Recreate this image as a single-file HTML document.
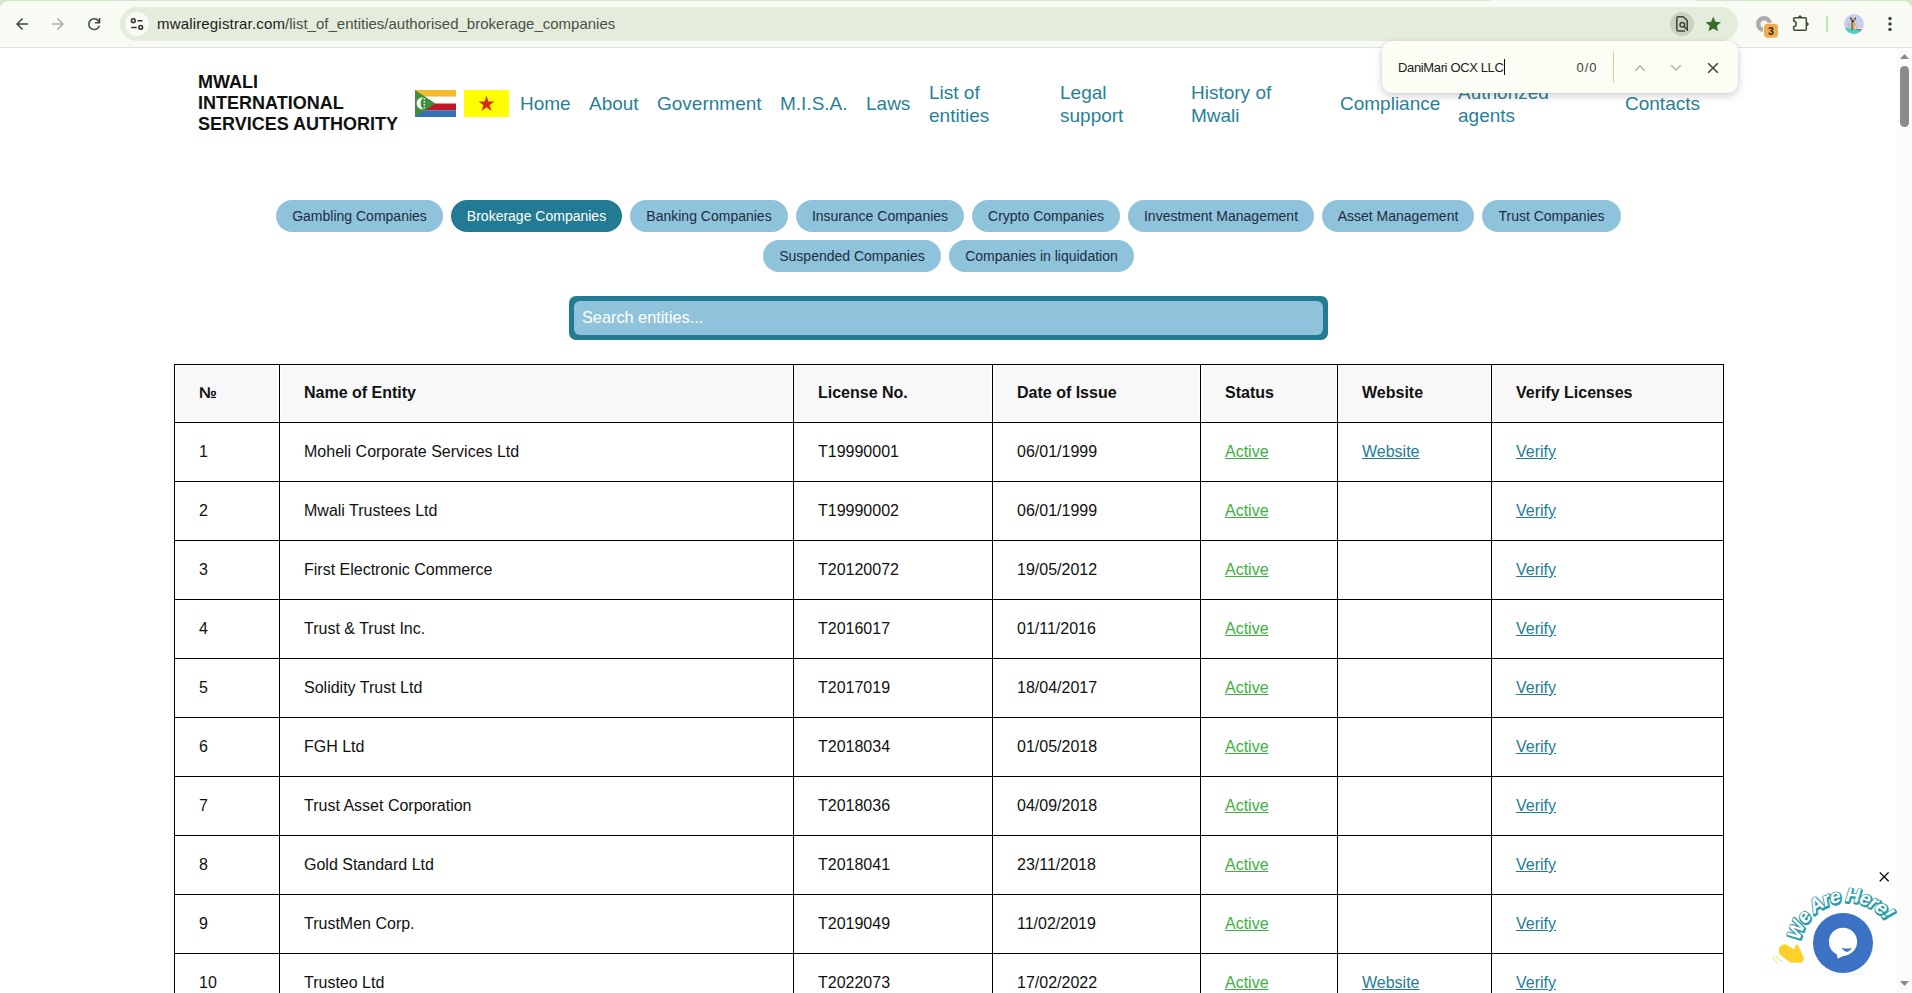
<!DOCTYPE html>
<html lang="en">
<head>
<meta charset="utf-8">
<title>Authorised Brokerage Companies</title>
<style>
*{box-sizing:border-box;margin:0;padding:0}
html,body{width:1912px;height:993px;overflow:hidden;background:#fff;font-family:"Liberation Sans",sans-serif;color:#111}
body{position:relative}
/* ---------- browser chrome ---------- */
#chrome{position:absolute;left:0;top:0;width:1912px;height:48px;background:#f8fbf3;border-bottom:1px solid #dfe3d8}
#chrome .topstrip{position:absolute;left:0;top:0;width:1912px;height:1px;background:#d3e5cb}
#omni{position:absolute;left:120px;top:7px;width:1618px;height:34px;border-radius:17px;background:#e4eddc}
#omni .tune{position:absolute;left:5px;top:5px;width:24px;height:24px;border-radius:12px;background:#f8fbf3}
#url{position:absolute;left:157px;top:15px;font-size:15px;line-height:18px;color:#4b5047;white-space:nowrap;letter-spacing:0}
#url b{font-weight:normal;color:#1d211b;letter-spacing:.17px}
.tb{position:absolute}
/* ---------- find bar ---------- */
#find{position:absolute;left:1382px;top:41px;width:356px;height:52px;border-radius:10px;background:#fcfdf5;box-shadow:0 3px 9px rgba(0,0,0,.18),0 0 2px rgba(0,0,0,.08);z-index:20}
#find .q{position:absolute;left:16px;top:18px;font-size:13px;line-height:18px;color:#1d211b;white-space:nowrap;letter-spacing:-.36px}
#find .cnt{position:absolute;left:194.500px;top:18px;font-size:13px;line-height:18px;color:#3c4238;letter-spacing:1px}
#find .sep{position:absolute;left:231px;top:10px;width:1px;height:32px;background:#b9dca0}
#find .caret{position:absolute;left:122px;top:18px;width:1px;height:16px;background:#111}
/* ---------- page ---------- */
#page{position:absolute;left:0;top:48px;width:1897px;height:945px;overflow:hidden;background:#fff}
#sb{position:absolute;left:1897px;top:48px;width:15px;height:945px;background:#fbfbfb}
#sb .thumb{position:absolute;left:3px;top:18px;width:9px;height:61px;border-radius:4.5px;background:#8b8b8b}
#logo{position:absolute;left:198px;top:24px;font-weight:bold;font-size:18px;line-height:21px;color:#111;white-space:nowrap}
.nav{position:absolute;font-size:19px;line-height:23px;color:#2a7f98;white-space:nowrap}
.pill{position:absolute;height:32px;border-radius:16px;background:#8fc3dc;color:#1d2c3f;font-size:14px;line-height:32px;text-align:center;white-space:nowrap}
.pill.on{background:#227b92;color:#fff}
#search{position:absolute;left:569px;top:248px;width:759px;height:44px;border-radius:7px;background:#227b92}
#search i{position:absolute;left:5px;top:5px;right:5px;bottom:5px;border-radius:6px;background:#8fc3dc}
#search span{position:absolute;left:13px;top:10px;font-size:16.3px;line-height:22px;color:#fff}
table{position:absolute;left:174px;top:316px;border-collapse:collapse;table-layout:fixed;width:1549px;font-size:16px;line-height:18px}
th,td{border:1px solid #000;padding:20px 24px;text-align:left;white-space:nowrap;height:59px;vertical-align:middle}
th{background:#f8f8f8;font-weight:bold;height:58px;padding:19px 24px 20px;box-shadow:inset 0 0 0 1px #fff}
a.g{color:#40b040;text-decoration:underline}
a.b{color:#237c95;text-decoration:underline}
</style>
</head>
<body>
<div id="chrome">
  <div class="topstrip"></div><div class="tb" style="left:1490px;top:0;width:205px;height:1px;background:#f3f8ec"></div>
  <div id="omni"><div class="tune"></div></div>

  <svg class="tb" style="left:0;top:0" width="14" height="14" viewBox="0 0 14 14"><path d="M0 0H14V1H9Q1 1 0 9Z" fill="#d3e5cb"/></svg>
  <svg class="tb" style="left:1898px;top:0" width="14" height="14" viewBox="0 0 14 14"><path d="M14 0H0V1H5Q13 1 14 9Z" fill="#d3e5cb"/></svg>
  <svg class="tb" style="left:13px;top:15px" width="18" height="18" viewBox="0 0 24 24"><path fill="#3f4a3a" d="M20 11H7.83l5.59-5.59L12 4l-8 8 8 8 1.41-1.41L7.83 13H20v-2z"/></svg>
  <svg class="tb" style="left:49px;top:15px" width="18" height="18" viewBox="0 0 24 24"><path fill="#a9aea5" d="M4 11h12.17l-5.59-5.59L12 4l8 8-8 8-1.41-1.41L16.170 13H4v-2z"/></svg>
  <svg class="tb" style="left:84.8px;top:14.8px" width="18.4" height="18.4" viewBox="0 0 24 24"><path fill="#3f4a3a" d="M12 20q-3.350 0-5.675-2.325T4 12q0-3.350 2.325-5.675T12 4q1.725 0 3.300.7125T18 6.750V4h2v7h-7V9h4.200q-.8-1.400-2.1875-2.200T12 6Q9.500 6 7.750 7.750T6 12q0 2.500 1.750 4.250T12 18q1.925 0 3.475-1.100T17.650 14h2.100q-.7 2.650-2.850 4.325T12 20Z"/></svg>
  <svg class="tb" style="left:125px;top:12px" width="24" height="24" viewBox="0 0 24 24" fill="none" stroke="#2e362b" stroke-width="1.5"><circle cx="8.300" cy="8.700" r="1.900"/><path d="M12.500 8.700H17.400M6.200 15.400H11.700"/><circle cx="15.700" cy="15.400" r="1.900"/></svg>
  <div class="tb" style="left:1670px;top:12px;width:24px;height:24px;border-radius:12px;background:#c9d2c1"></div>
  <svg class="tb" style="left:1674px;top:15px" width="16" height="18" viewBox="0 0 16 18" fill="none" stroke="#3b4437" stroke-width="1.500" stroke-linejoin="round"><path d="M13.200 15.200V5.500L9.200 1.700H4.200Q2.800 1.700 2.800 3.100V14.600Q2.800 16 4.200 16H11"/><circle cx="8.300" cy="9.800" r="2.300"/><path d="M10 11.500L13.600 15.300" stroke-linecap="round"/></svg>
  <svg class="tb" style="left:1704.300px;top:15.100px" width="18.600" height="18.600" viewBox="0 0 24 24"><path fill="#3b6b2b" d="M12 17.270L18.180 21l-1.640-7.030L22 9.240l-7.190-.610L12 2 9.190 8.630 2 9.240l5.460 4.730L5.820 21z"/></svg>
  <svg class="tb" style="left:1752px;top:12px" width="30" height="28" viewBox="0 0 30 28"><circle cx="12" cy="12" r="5.750" fill="none" stroke="#ababab" stroke-width="4.500"/><rect x="11" y="10.800" width="16" height="16" rx="4.500" fill="#f8fbf3"/><rect x="12" y="11.800" width="14" height="14" rx="3.500" fill="#f0ab4d"/><text x="18.800" y="22.900" font-family="Liberation Sans, sans-serif" font-weight="bold" font-size="10.500" text-anchor="middle" fill="#2a2118">3</text></svg>
  <svg class="tb" style="left:1790px;top:13px" width="22" height="22" viewBox="0 0 22 22"><path d="M4.700 4.750H15.300Q16.350 4.750 16.350 5.800V16.200Q16.350 17.250 15.300 17.250H4.700Q3.650 17.250 3.650 16.200V13.700C7 13.500 7 8.300 3.650 8.100V5.800Q3.650 4.750 4.700 4.750Z" fill="none" stroke="#3a4a35" stroke-width="1.500" stroke-linejoin="round"/><path d="M7.900 4.300Q10 .300 12.100 4.300ZM16.800 8.900Q20.800 11 16.800 13.100Z" fill="#3a4a35"/></svg>
  <div class="tb" style="left:1826px;top:16px;width:2px;height:16px;border-radius:1px;background:#b5e89d"></div>
  <svg class="tb" style="left:1844px;top:14px" width="20" height="20" viewBox="0 0 20 20"><defs><clipPath id="av"><circle cx="10" cy="10" r="9.900"/></clipPath></defs><g clip-path="url(#av)"><rect width="20" height="20" fill="#c8cee9"/><path d="M3.400 9.600Q4.700 8.300 6 9.600V13.600H3.400Z" fill="#b6bccf"/><path d="M13 13.800H18V15.200H13Z" fill="#e4e7f6"/><path d="M0 13.700L20 16.300V20H0Z" fill="#40d3c6"/><path d="M11.800 15L17.400 15.900" stroke="#5a2b2b" stroke-width=".700"/><path d="M7.250 8.200H10.400L12.900 12.600L12.600 15.400L7.400 15.600Z" fill="#c9a36b"/><path d="M9.600 10.400L12.900 11.900L12.600 15.400H10Z" fill="#e3c795"/><path d="M7.300 8.500H8.300L8.700 16.200H7.700Z" fill="#6b4c30"/><ellipse cx="8.900" cy="6.300" rx="2.200" ry="1.900" fill="#cfa56c"/><path d="M6.150 3L8.200 4.200L6.800 6.400ZM12 3.200L10.300 4.500L11.500 6.300Z" fill="#2a2320"/><ellipse cx="8.700" cy="7.300" rx="1.400" ry=".95" fill="#221c1a"/></g></svg>
  <svg class="tb" style="left:1886px;top:14px" width="8" height="20" viewBox="0 0 8 20" fill="#33452b"><circle cx="4" cy="4.450" r="1.700"/><circle cx="4" cy="9.900" r="1.700"/><circle cx="4" cy="15.400" r="1.700"/></svg>
  <div id="url"><b>mwaliregistrar.com</b>/list_of_entities/authorised_brokerage_companies</div>
</div>

<div id="page">
  <div id="logo">MWALI<br>INTERNATIONAL<br>SERVICES AUTHORITY</div>

  <svg style="position:absolute;left:415px;top:42px" width="41" height="27" viewBox="0 0 41 27"><rect width="41" height="6.750" fill="#f6bd29"/><rect y="6.750" width="41" height="6.750" fill="#fff"/><rect y="13.500" width="41" height="6.750" fill="#c1192b"/><rect y="20.250" width="41" height="6.750" fill="#3570b7"/><path d="M0 0L20.400 13.500L0 27Z" fill="#3c8f3c"/><path d="M8.600 7.600A5.900 5.900 0 1 0 8.600 19.200A7 7 0 0 1 8.600 7.600Z" fill="#fff"/><g fill="#fff"><rect x="8.600" y="8.300" width="1.500" height="1.300"/><rect x="8.600" y="11.200" width="1.500" height="1.300"/><rect x="8.600" y="14.100" width="1.500" height="1.300"/><rect x="8.600" y="17" width="1.500" height="1.300"/></g></svg>
  <svg style="position:absolute;left:464px;top:42px" width="45" height="27" viewBox="0 0 45 27"><rect width="45" height="27" fill="#ffff00"/><path d="M22.500 5.700l1.900 5.800h6.100l-4.900 3.600 1.900 5.800-5-3.600-5 3.600 1.900-5.800-4.900-3.600h6.100z" fill="#de2a1a"/></svg>
  <div class="nav" style="left:520px;top:44px">Home</div>
  <div class="nav" style="left:589px;top:44px">About</div>
  <div class="nav" style="left:657px;top:44px">Government</div>
  <div class="nav" style="left:780px;top:44px">M.I.S.A.</div>
  <div class="nav" style="left:866px;top:44px">Laws</div>
  <div class="nav" style="left:929px;top:33px">List of<br>entities</div>
  <div class="nav" style="left:1060px;top:33px">Legal<br>support</div>
  <div class="nav" style="left:1191px;top:33px">History of<br>Mwali</div>
  <div class="nav" style="left:1340px;top:44px">Compliance</div>
  <div class="nav" style="left:1458px;top:33px">Authorized<br>agents</div>
  <div class="nav" style="left:1625px;top:44px">Contacts</div>

  <div class="pill" style="left:276px;top:152px;width:167px">Gambling Companies</div>
  <div class="pill on" style="left:451px;top:152px;width:171px">Brokerage Companies</div>
  <div class="pill" style="left:630px;top:152px;width:158px">Banking Companies</div>
  <div class="pill" style="left:796px;top:152px;width:168px">Insurance Companies</div>
  <div class="pill" style="left:972px;top:152px;width:148px">Crypto Companies</div>
  <div class="pill" style="left:1128px;top:152px;width:186px">Investment Management</div>
  <div class="pill" style="left:1322px;top:152px;width:152px">Asset Management</div>
  <div class="pill" style="left:1482px;top:152px;width:139px">Trust Companies</div>
  <div class="pill" style="left:763px;top:192px;width:178px">Suspended Companies</div>
  <div class="pill" style="left:949px;top:192px;width:185px">Companies in liquidation</div>

  <div id="search"><i></i><span>Search entities...</span></div>

  <table>
    <colgroup><col style="width:105px"><col style="width:514px"><col style="width:199px"><col style="width:208px"><col style="width:137px"><col style="width:154px"><col style="width:232px"></colgroup>
    <tr><th>№</th><th>Name of Entity</th><th>License No.</th><th>Date of Issue</th><th>Status</th><th>Website</th><th>Verify Licenses</th></tr>
    <tr><td>1</td><td>Moheli Corporate Services Ltd</td><td>T19990001</td><td>06/01/1999</td><td><a class="g">Active</a></td><td><a class="b">Website</a></td><td><a class="b">Verify</a></td></tr>
    <tr><td>2</td><td>Mwali Trustees Ltd</td><td>T19990002</td><td>06/01/1999</td><td><a class="g">Active</a></td><td></td><td><a class="b">Verify</a></td></tr>
    <tr><td>3</td><td>First Electronic Commerce</td><td>T20120072</td><td>19/05/2012</td><td><a class="g">Active</a></td><td></td><td><a class="b">Verify</a></td></tr>
    <tr><td>4</td><td>Trust &amp; Trust Inc.</td><td>T2016017</td><td>01/11/2016</td><td><a class="g">Active</a></td><td></td><td><a class="b">Verify</a></td></tr>
    <tr><td>5</td><td>Solidity Trust Ltd</td><td>T2017019</td><td>18/04/2017</td><td><a class="g">Active</a></td><td></td><td><a class="b">Verify</a></td></tr>
    <tr><td>6</td><td>FGH Ltd</td><td>T2018034</td><td>01/05/2018</td><td><a class="g">Active</a></td><td></td><td><a class="b">Verify</a></td></tr>
    <tr><td>7</td><td>Trust Asset Corporation</td><td>T2018036</td><td>04/09/2018</td><td><a class="g">Active</a></td><td></td><td><a class="b">Verify</a></td></tr>
    <tr><td>8</td><td>Gold Standard Ltd</td><td>T2018041</td><td>23/11/2018</td><td><a class="g">Active</a></td><td></td><td><a class="b">Verify</a></td></tr>
    <tr><td>9</td><td>TrustMen Corp.</td><td>T2019049</td><td>11/02/2019</td><td><a class="g">Active</a></td><td></td><td><a class="b">Verify</a></td></tr>
    <tr><td>10</td><td>Trusteo Ltd</td><td>T2022073</td><td>17/02/2022</td><td><a class="g">Active</a></td><td><a class="b">Website</a></td><td><a class="b">Verify</a></td></tr>
  </table>
</div>


<svg id="chat" style="position:absolute;left:1765px;top:865px;z-index:5" width="132" height="122" viewBox="0 0 132 122">
  <defs><path id="arc" d="M34.2 80.4A48.0 48.0 0 0 1 127.1 68.2"/></defs>
  <ellipse cx="78" cy="108.500" rx="22" ry="2.500" fill="#000" opacity=".03"/>
  <circle cx="78" cy="78" r="30" fill="#3b72c4"/>
  <circle cx="78" cy="76.800" r="14.100" fill="#fff"/>
  <path d="M71.300 87.500L72.800 93.800L83 88.500Z" fill="#fff"/>
  <path d="M72.800 93.900Q86.600 90.500 91.300 83.300L96 92L78 99Z" fill="#3b72c4"/>
  <path d="M76.800 83Q81.800 84 86.900 83Q81.800 90.600 76.800 83Z" fill="#3b72c4"/>
  <path d="M18.400 79.900L20 79.400L29.800 85.200L30.500 80.600Q31.700 78.900 32.900 80.500L38.200 92.300L38.400 94L37.100 97.200H25.200L14.900 89.200L14.400 86V82.500L15.700 81.400Z" fill="#fdd12a" stroke="#fdd12a" stroke-width=".800" stroke-linejoin="round"/>
  <path d="M16.400 81.900L25.500 87.300M15.200 84L24.300 89.400M15 86.600L23.300 91.600" fill="none" stroke="#f7b928" stroke-width=".350"/>
  <path d="M8.300 92.300Q9 95.800 12 97.500M11.400 90.900Q12.500 94.600 16.700 96.200" fill="none" stroke="#fdd12a" stroke-width=".800" stroke-linecap="round"/>
  <path d="M114.800 7.400L123.600 16.200M123.600 7.400L114.800 16.200" stroke="#000" stroke-width="1.300" fill="none"/>
  <g font-family="Liberation Sans, sans-serif" font-weight="bold" font-style="italic" font-size="19.500" letter-spacing="-1" stroke-linejoin="round">
  <text fill="#2a9da6" stroke="#2a9da6" stroke-width="2.800" transform="translate(.7 .9)"><textPath href="#arc" startOffset="4.600">We Are Here!</textPath></text>
  <text fill="#fff" stroke="#2a9da6" stroke-width="1.100" paint-order="stroke"><textPath href="#arc" startOffset="4.600">We Are Here!</textPath></text>
  </g>
</svg>

<div id="sb"><div class="thumb"></div>
  <svg style="position:absolute;left:3px;top:6px" width="9" height="5" viewBox="0 0 9 5"><path d="M0 5L4.500 0L9 5Z" fill="#8b8b8b"/></svg>
  <svg style="position:absolute;left:3px;top:933px" width="9" height="5" viewBox="0 0 9 5"><path d="M0 0L4.500 5L9 0Z" fill="#8b8b8b"/></svg>
</div>

<div id="find">
  <div class="q">DaniMari OCX LLC</div>
  <div class="caret"></div>
  <div class="cnt">0/0</div>
  <div class="sep"></div>

  <svg style="position:absolute;left:252px;top:21.500px" width="12" height="10" viewBox="0 0 12 10" fill="none" stroke="#b4b8b0" stroke-width="1.600"><path d="M1.200 7.700L6 2.900l4.800 4.800"/></svg>
  <svg style="position:absolute;left:288px;top:21.500px" width="12" height="10" viewBox="0 0 12 10" fill="none" stroke="#b4b8b0" stroke-width="1.600"><path d="M1.200 2.300L6 7.100l4.800-4.800"/></svg>
  <svg style="position:absolute;left:324.500px;top:20.500px" width="12" height="12" viewBox="0 0 12 12" fill="none" stroke="#3f4a3a" stroke-width="1.600"><path d="M1.200 1.200l9.600 9.600M10.800 1.200l-9.600 9.600"/></svg>
</div>
</body>
</html>
